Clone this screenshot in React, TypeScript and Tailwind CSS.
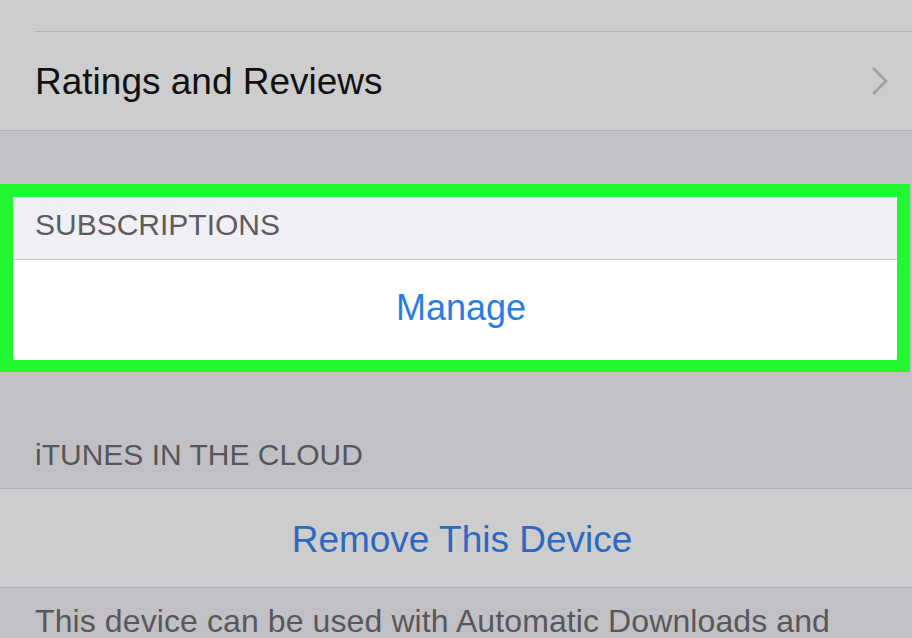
import React from 'react';

const font = { fontFamily: '"Liberation Sans", Arial, Helvetica, sans-serif' };

function Chevron() {
  return (
    <svg width="16" height="28" viewBox="0 0 16 28" fill="none">
      <polyline points="2,2 14,14 2,26" stroke="#a3a3a5" strokeWidth="3" strokeLinecap="round" strokeLinejoin="round" />
    </svg>
  );
}

export default function App() {
  return (
    <div className="w-[912px] h-[638px] overflow-hidden bg-[#c1c1c5] flex flex-col" style={font}>
      {/* previous cell (cut off at top) */}
      <div className="h-[31px] bg-[#cdcdcd] shrink-0" />
      <div className="h-px bg-[#cdcdcd] shrink-0">
        <div className="ml-[35px] h-px bg-[#b3b3b5]" />
      </div>

      {/* Ratings and Reviews row */}
      <div className="h-[99px] shrink-0 bg-[#cdcdcd] border-b border-[#b5b5b8] flex items-center justify-between pl-[35px] pr-[24px]">
        <span className="text-[37px] leading-none text-[#111111]">Ratings and Reviews</span>
        <Chevron />
      </div>

      {/* gap */}
      <div className="h-[53px] shrink-0" />

      {/* highlighted Subscriptions group */}
      <div className="w-[910px] shrink-0 border-[#22f832] border-t-[13px] border-l-[13px] border-r-[13px] border-b-[12px] flex flex-col">
        <div className="h-[63px] bg-[#efeff4] pl-[22px] pt-[13px] border-b border-[#c8c7cc]">
          <span className="text-[30px] leading-none text-[#5d5d61]">SUBSCRIPTIONS</span>
        </div>
        <div className="h-[100px] bg-white flex items-center justify-center pl-[12px] pb-[5px]">
          <span className="text-[36px] leading-none text-[#2a7ddf]">Manage</span>
        </div>
      </div>

      {/* iTunes in the Cloud header */}
      <div className="h-[117px] shrink-0 pl-[35px] pt-[68px] border-b border-[#adadb0]">
        <span className="text-[30px] leading-none text-[#57575b]">iTUNES IN THE CLOUD</span>
      </div>

      <div className="h-[99px] shrink-0 bg-[#cdcdcd] border-b border-[#adadb0] flex items-center justify-center pl-[12px] pt-[3px]">
        <span className="text-[37px] leading-none text-[#2d69c3]">Remove This Device</span>
      </div>

      <div className="pl-[35px] pt-[17px]">
        <p className="text-[32px] leading-none text-[#58585b] whitespace-nowrap tracking-[0.1px]">
          This device can be used with Automatic Downloads and
        </p>
      </div>
    </div>
  );
}
